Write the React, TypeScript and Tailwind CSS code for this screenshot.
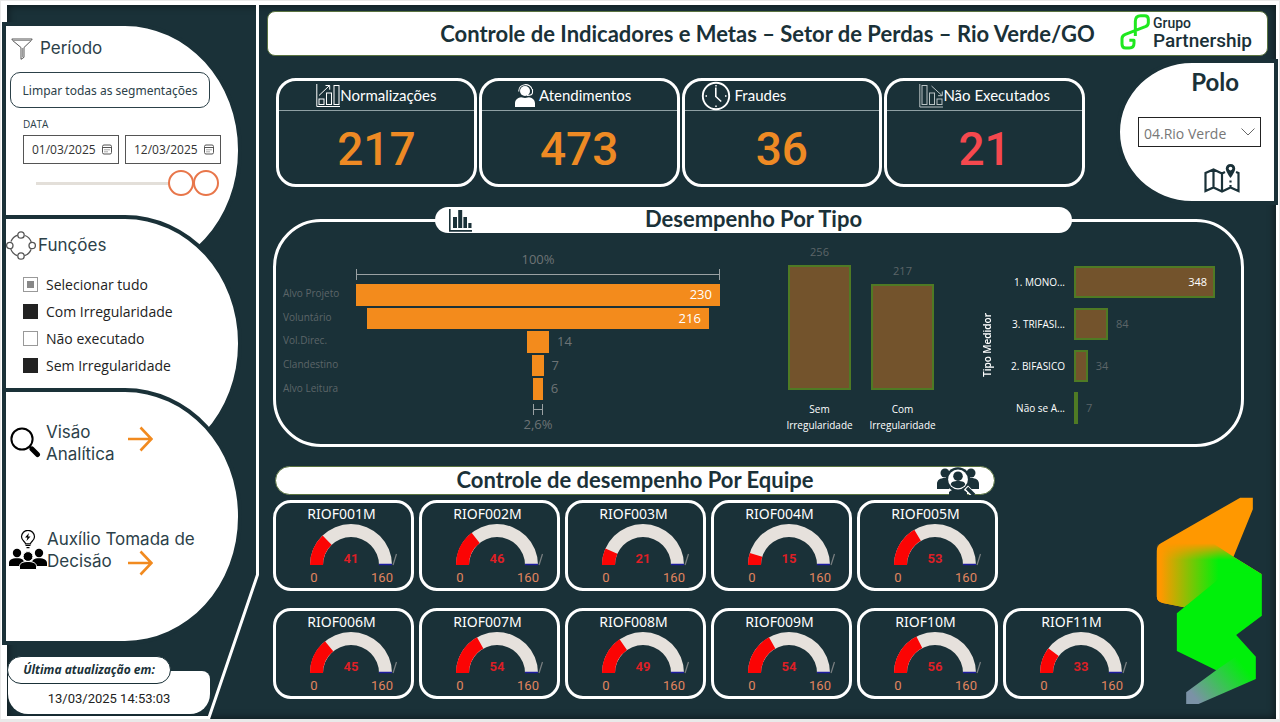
import React, { useState } from "react";

const SANS = "font-['Open_Sans','Noto_Sans',sans-serif]";

/* ---------- icons ---------- */

function FunnelIcon() {
  return (
    <svg className="h-[22px] w-[22px]" viewBox="0 0 22 22" fill="none" stroke="#555" strokeWidth="1" aria-hidden="true">
      <path d="M.8 1h20.400l-1.200 1.800-7 6.700v9.800l-3 2v-11.800l-8-6.700z" />
      <path d="M2.500 2.500h17M11.500 10v9" strokeWidth=".6" />
    </svg>
  );
}

function NodesIcon() {
  return (
    <svg className="h-[29px] w-[30px]" viewBox="0 0 30 29" fill="none" stroke="#555" strokeWidth="1.300" aria-hidden="true">
      <circle cx="15" cy="14.500" r="10.800" strokeDasharray="9.500 7.460" strokeDashoffset="-3.800" />
      <circle cx="15" cy="4" r="3.200" />
      <circle cx="15" cy="25" r="3.200" />
      <circle cx="3.800" cy="14.500" r="3.200" />
      <circle cx="26.200" cy="14.500" r="3.200" />
    </svg>
  );
}

function CalendarIcon() {
  return (
    <svg className="h-[11px] w-[10px] shrink-0" viewBox="0 0 10 11" fill="none" stroke="#555" strokeWidth="1" aria-hidden="true">
      <rect x=".5" y="1" width="9" height="9" rx="1.500" />
      <path d="M.5 3.500h9" />
      <path d="M2.500 5.800h1M4.500 5.800h1M6.500 5.800h1M2.500 7.800h1M4.500 7.800h1" />
    </svg>
  );
}

function MagnifierIcon() {
  return (
    <svg className="h-[31px] w-[31px]" viewBox="0 0 31 31" fill="none" stroke="#000" aria-hidden="true">
      <circle cx="12" cy="12" r="10.600" strokeWidth="2" />
      <path d="M19.500 19.500l2.500 2.500" strokeWidth="2" />
      <path d="M22 22l5.500 5.500" strokeWidth="5" strokeLinecap="round" />
    </svg>
  );
}

function ArrowIcon() {
  return (
    <svg className="h-[26px] w-[25px] shrink-0" viewBox="0 0 25 26" fill="none" stroke="#f18a1f" strokeWidth="2.600" aria-hidden="true">
      <path d="M0 13h23M12.500 1.500L23.500 13 12.500 24.500" />
    </svg>
  );
}

function IdeaTeamIcon() {
  return (
    <svg className="h-[40px] w-[38px]" viewBox="0 0 38 40" aria-hidden="true">
      <path d="M16.500 13.800c0-2-4-3-4-7a6.500 6.500 0 0113 0c0 4-4 5-4 7z" fill="#fff" stroke="#000" strokeWidth="1.200" />
      <path d="M20 3l-4 4.600h2.400L17.500 11l4-4.600h-2.400z" fill="#000" />
      <path d="M16.500 15.500h5M17.500 17.700h3" stroke="#000" strokeWidth="1.200" />
      <circle cx="8" cy="23" r="4.200" />
      <circle cx="30" cy="23" r="4.200" />
      <path d="M0 36v-3c0-3 2.500-4.700 8-4.700s7 1.700 7 4.700v3zM23 36v-3c0-3 2-4.700 7-4.700s8 1.700 8 4.700v3z" />
      <circle cx="19" cy="26.500" r="4.900" stroke="#fff" strokeWidth="1" />
      <path d="M10.500 39.500v-3c0-3.200 3-5 8.500-5s8.500 1.800 8.500 5v3z" stroke="#fff" strokeWidth="1" />
    </svg>
  );
}

function RisingChartIcon() {
  return (
    <svg className="h-[24px] w-[24px]" viewBox="0 0 24 24" fill="none" stroke="#fff" strokeWidth="1" aria-hidden="true">
      <path d="M.8 0v22.500H24" />
      <rect x="3" y="15" width="5" height="5.500" />
      <rect x="10.500" y="9" width="5" height="11.500" />
      <rect x="18" y="1.500" width="5" height="19" />
      <path d="M3 11.500L13.500 1.500M9.500 1.500h4.200v4.200" />
    </svg>
  );
}

function FallingChartIcon() {
  return (
    <svg className="h-[24px] w-[24px]" viewBox="0 0 24 24" fill="none" stroke="#b9c2c4" strokeWidth="1" aria-hidden="true">
      <path d="M.8 0v23H24" />
      <rect x="3" y="1.500" width="5" height="19" />
      <rect x="10.500" y="9" width="5" height="11.500" />
      <rect x="18" y="15" width="5" height="5.500" />
      <path d="M12.500 2L23 11.500M23.300 7.500v4.200h-4.200" />
    </svg>
  );
}

function AgentIcon() {
  return (
    <svg className="h-[24px] w-[20px]" viewBox="0 0 20 24" fill="#fff" aria-hidden="true">
      <circle cx="10" cy="7" r="5" />
      <path d="M3.800 7.500C3.300-1 16-1.500 17 5.500M17.500 5v3.500c0 2-2.500 3-5.500 3" fill="none" stroke="#fff" strokeWidth="1.100" />
      <path d="M0 23v-3.500c0-4 3.500-6 6-6.200l4 .8 4-.8c2.500.2 6 2.200 6 6.200V23z" />
    </svg>
  );
}

function ClockIcon() {
  return (
    <svg className="h-[30px] w-[30px]" viewBox="0 0 30 30" fill="none" stroke="#fff" aria-hidden="true">
      <circle cx="15" cy="15" r="13.200" strokeWidth="1.900" />
      <path d="M14.800 6.500v9l5.400 5" strokeWidth="1.600" />
      <path d="M15 4v1.500M15 24.500v1.500M4.500 15h1.500M24 15h1.500" strokeWidth="1.500" />
    </svg>
  );
}

function BarsIcon() {
  return (
    <svg className="h-[25px] w-[24px]" viewBox="0 0 24 25" fill="#1a3138" aria-hidden="true">
      <path d="M1 1h1.600v21H24v1.800H1z" />
      <path d="M5 9h4v11H5zM10.200 2h4v18h-4zM15.400 9h3.600v11h-3.600zM20.300 15h3.200v5h-3.200z" />
    </svg>
  );
}

function TeamSearchIcon() {
  return (
    <svg className="h-[28px] w-[44px]" viewBox="0 0 44 28" fill="#1a3138" aria-hidden="true">
      <circle cx="9" cy="6" r="4.500" />
      <circle cx="35" cy="6" r="4.500" />
      <path d="M1 22v-5c0-4 3-6 8-6h4v11zM43 22v-5c0-4-3-6-8-6h-4v11z" />
      <path d="M13 28v-3c2-2 5-3 9-3s7 1 9 3v3z" />
      <circle cx="22" cy="12.500" r="12.300" />
      <circle cx="22" cy="12.500" r="9.900" fill="#fff" />
      <circle cx="22" cy="9.200" r="4.800" />
      <path d="M14.800 17.800c0-3 3-3.800 7.200-3.800s7.200.8 7.200 3.800c-3.200 4.500-11.200 4.500-14.400 0z" />
      <path d="M30 20.500l7 7" stroke="#fff" strokeWidth="5.600" />
      <path d="M31 21l7 7" stroke="#1a3138" strokeWidth="3.600" />
    </svg>
  );
}

function MapPinIcon() {
  return (
    <svg className="h-[29px] w-[36px]" viewBox="0 0 36 29" fill="none" stroke="#1a3138" strokeWidth="2.200" aria-hidden="true">
      <path d="M21 8l-3 1.500-8.500-4L1.500 9v18l8-3.500L18 27.500l8.500-4 8 3.500V9L32 8M9.500 5.500v18M18 9.500v18M26.500 16.500v2M26.500 21v2.500" />
      <path d="M26.500 0c-2.800 0-4.700 2-4.700 4.600 0 3.600 4.700 9.400 4.700 9.400s4.700-5.800 4.700-9.400C31.200 2 29.300 0 26.500 0z" fill="#1a3138" stroke="none" />
      <circle cx="26.500" cy="4.600" r="1.800" fill="#fff" stroke="none" />
    </svg>
  );
}

function PartnershipMark() {
  return (
    <svg className="h-[36px] w-[30px]" viewBox="0 0 90 108" fill="none" stroke="#1fe81f" strokeWidth="9" strokeLinejoin="round" aria-hidden="true">
      <path d="M46 66V22Q46 5 62 5H74Q85 5 85 16V26Q85 34 76 38L16 61Q6 65 6 74V90Q6 102 17 102H28Q42 102 42 88V79H28" />
    </svg>
  );
}

function RibbonArt() {
  return (
    <svg className="h-[208px] w-[107px] shrink-0" viewBox="48 51 320 624" aria-hidden="true">
      <defs>
        <linearGradient id="side" gradientUnits="userSpaceOnUse" x1="62" y1="0" x2="235" y2="0">
          <stop offset="0" stopColor="#ff9800" />
          <stop offset="1" stopColor="#00f00a" />
        </linearGradient>
        <linearGradient id="fade" gradientUnits="userSpaceOnUse" x1="0" y1="190" x2="0" y2="240">
          <stop offset="0" stopColor="#000" />
          <stop offset="1" stopColor="#fff" />
        </linearGradient>
        <linearGradient id="tail" gradientUnits="userSpaceOnUse" x1="165" y1="655" x2="300" y2="545">
          <stop offset="0" stopColor="#7b92a6" />
          <stop offset="1" stopColor="#00f00a" />
        </linearGradient>
        <mask id="mid">
          <rect x="0" y="0" width="420" height="700" fill="url(#fade)" />
        </mask>
      </defs>
      <path d="M62 190L300 53H338V88L280 230L365 283L250 300L132 382L68 369Q50 364 50 350V212Q50 197 62 190Z" fill="#ff9800" />
      <path d="M50 188H216L280 230L365 283L250 300L132 382L68 369Q50 364 50 350Z" fill="url(#side)" mask="url(#mid)" />
      <path d="M365 283V407L288 465L347 530L228 571L110 513V400L262 276Z" fill="#00f00a" />
      <path d="M228 571L290 528L347 530V597L175 672H138V637Z" fill="url(#tail)" />
    </svg>
  );
}

/* ---------- sidebar ---------- */

const thumb =
  "[&::-webkit-slider-thumb]:pointer-events-auto [&::-webkit-slider-thumb]:h-[26px] [&::-webkit-slider-thumb]:w-[26px] [&::-webkit-slider-thumb]:appearance-none [&::-webkit-slider-thumb]:rounded-full [&::-webkit-slider-thumb]:border-2 [&::-webkit-slider-thumb]:border-[#e8764a] [&::-webkit-slider-thumb]:bg-white";

const panelShape =
  "relative -ml-[5px] h-[257px] w-[240px] rounded-tr-[117px_128px] rounded-br-[117px_128px] border-4 border-[#1a3138] bg-white";

function DateField({ label, initial }: { label: string; initial: string }) {
  const [value, setValue] = useState(initial);
  return (
    <label className="flex h-[29px] w-24 items-center border border-[#555] pr-[6px] pl-2">
      <input
        aria-label={label}
        className="w-full min-w-0 bg-transparent text-xs text-[#333] outline-none"
        value={value}
        onChange={(e) => setValue(e.target.value)}
      />
      <CalendarIcon />
    </label>
  );
}

function Period() {
  const [from, setFrom] = useState(85);
  const [to, setTo] = useState(100);
  return (
    <section className={panelShape}>
      <h2 className="mt-3 ml-[5px] flex h-[22px] items-center gap-[7px] font-['Inter',sans-serif] text-[17px] text-[#2c4149]">
        <FunnelIcon />
        Período
      </h2>
      <button
        type="button"
        className="mt-3 ml-1 h-9 w-[200px] rounded-[10px] border border-[#2c4149] pt-[2px] font-['Noto_Sans',sans-serif] text-xs whitespace-nowrap text-[#2c4149]"
      >
        Limpar todas as segmentações
      </button>
      <fieldset className={`ml-[17px] ${SANS}`}>
        <legend className="pt-2 text-[10px] leading-4 font-medium text-[#2c4149]">DATA</legend>
        <div className="mt-[3px] flex gap-[6px]">
          <DateField label="Data inicial" initial="01/03/2025" />
          <DateField label="Data final" initial="12/03/2025" />
        </div>
      </fieldset>
      <div className="relative mt-[6px] ml-[17px] h-[26px] w-[196px]">
        <div className="absolute top-3 right-[13px] left-[13px] h-[3px] bg-[#e3dfd9]" />
        <div className="absolute top-3 right-[13px] h-[2px] w-[26px] bg-[#e8764a]" />
        <input
          type="range"
          aria-label="Início do período"
          className={`pointer-events-none absolute inset-0 w-full appearance-none bg-transparent ${thumb}`}
          value={from}
          onChange={(e) => setFrom(Number(e.target.value))}
        />
        <input
          type="range"
          aria-label="Fim do período"
          className={`pointer-events-none absolute inset-0 w-full appearance-none bg-transparent ${thumb}`}
          value={to}
          onChange={(e) => setTo(Number(e.target.value))}
        />
      </div>
    </section>
  );
}

function Functions() {
  const [picked, setPicked] = useState<Record<string, boolean>>({
    "Com Irregularidade": true,
    "Não executado": false,
    "Sem Irregularidade": true,
  });
  const names = Object.keys(picked);
  const all = names.every((n) => picked[n]);
  const some = names.some((n) => picked[n]);
  const box = "h-[15px] w-[15px] appearance-none border border-[#999] bg-white checked:border-[#222] checked:bg-[#222]";
  return (
    <section className={`${panelShape} -mt-16`}>
      <h2 className="mt-3 flex h-[29px] items-center gap-[2px] font-['Inter',sans-serif] text-[17px] text-[#2c4149]">
        <NodesIcon />
        Funções
      </h2>
      <ul className={`mt-[11px] ml-[17px] text-sm text-[#222] ${SANS}`}>
        <li>
          <label className="flex h-[27px] items-center gap-2">
            <input
              type="checkbox"
              className={some && !all ? "h-[15px] w-[15px] appearance-none border border-[#999] bg-[#888] shadow-[inset_0_0_0_3px_white]" : box}
              checked={all}
              onChange={() => setPicked(Object.fromEntries(names.map((n) => [n, !all])))}
            />
            Selecionar tudo
          </label>
        </li>
        {names.map((n) => (
          <li key={n}>
            <label className="flex h-[27px] items-center gap-2">
              <input type="checkbox" className={box} checked={picked[n]} onChange={() => setPicked({ ...picked, [n]: !picked[n] })} />
              {n}
            </label>
          </li>
        ))}
      </ul>
    </section>
  );
}

function Sidebar() {
  return (
    <aside className="relative flex w-[252px] shrink-0 flex-col pt-[17px]">
      <svg className="absolute inset-0 h-full w-full" viewBox="0 0 252 713" preserveAspectRatio="none" fill="none" stroke="#fff" strokeWidth="3" aria-hidden="true">
        <path d="M250.500 0V569L202 711.500H0" />
      </svg>
      <Period />
      <Functions />
      <nav className={`${panelShape} -mt-[84px] font-['Inter',sans-serif] text-[17px] leading-[22px] text-[#2c4149]`}>
        <a href="#visao" className="mt-[29px] ml-1 flex items-start">
          <span className="pt-[6px]">
            <MagnifierIcon />
          </span>
          <span className="ml-[5px] w-[82px]">
            Visão
            <br />
            Analítica
          </span>
          <span className="pt-[5px]">
            <ArrowIcon />
          </span>
        </a>
        <a href="#auxilio" className="mt-[63px] ml-[3px] flex items-center">
          <IdeaTeamIcon />
          <span className="whitespace-nowrap">
            Auxílio Tomada de
            <span className="flex h-[22px] items-start">
              <span className="w-[81px]">Decisão</span>
              <ArrowIcon />
            </span>
          </span>
        </a>
      </nav>
      <footer className="relative mt-[11px]">
        <div className={`relative z-10 flex h-[28px] w-[164px] items-center justify-center rounded-full border border-[#1a3138] bg-white text-xs font-bold text-[#1a3138] italic ${SANS}`}>
          Última atualização em:
        </div>
        <div className="-mt-[13px] ml-px flex h-[43px] w-[202px] items-center justify-center rounded-tr-lg rounded-b-[20px] bg-white pt-[12px] font-['Roboto',sans-serif] text-[13px] text-[#222]">
          13/03/2025 14:53:03
        </div>
      </footer>
    </aside>
  );
}

/* ---------- indicators ---------- */

const indicators = [
  { label: "Normalizações", value: 217, icon: <RisingChartIcon />, head: "justify-center", tone: "text-[#ee8a24]" },
  { label: "Atendimentos", value: 473, icon: <AgentIcon />, head: "justify-center gap-1 pr-3", tone: "text-[#ee8a24]" },
  { label: "Fraudes", value: 36, icon: <ClockIcon />, head: "gap-1 pl-4", tone: "text-[#ee8a24]" },
  { label: "Não Executados", value: 21, icon: <FallingChartIcon />, head: "justify-center", tone: "text-[#f5484e]" },
];

function Indicators() {
  return (
    <div className="mt-[19px] ml-[17px] grid flex-1 grid-cols-4 gap-[2px]">
      {indicators.map((i) => (
        <article key={i.label} className="h-[109px] overflow-hidden rounded-[20px] border-3 border-white">
          <h3 className={`flex h-[30px] items-center border-b border-[#8fa0a4] font-['Lato',sans-serif] text-[15px] text-white ${i.head}`}>
            {i.icon}
            {i.label}
          </h3>
          <p className={`pt-2 text-center font-['Roboto',sans-serif] text-[46px] leading-[60px] font-medium ${i.tone}`}>{i.value}</p>
        </article>
      ))}
    </div>
  );
}

function Polo() {
  return (
    <section className="-mr-[2px] ml-[31px] flex h-[146px] w-[162px] flex-col rounded-tl-[76px_73px] rounded-bl-[76px_73px] border-4 border-[#1a3138] bg-white pr-[13px]">
      <h2 className="mt-[5px] pr-[22px] text-right font-['Lato',sans-serif] text-2xl leading-7 font-bold text-[#1a3138]">
        <label htmlFor="polo">Polo</label>
      </h2>
      <div className="relative mt-[21px] ml-[18px]">
        <select id="polo" className={`h-[30px] w-full appearance-none border border-[#222] bg-white pt-[3px] pl-[5px] text-sm text-[#777] ${SANS}`}>
          <option>04.Rio Verde</option>
        </select>
        <svg className="pointer-events-none absolute top-[11px] right-[6px] h-2 w-[14px]" viewBox="0 0 14 8" fill="none" stroke="#666" aria-hidden="true">
          <path d="M.5.500L7 7 13.500.500" />
        </svg>
      </div>
      <div className="mt-[17px] mr-[21px] flex justify-end">
        <MapPinIcon />
      </div>
    </section>
  );
}

/* ---------- charts ---------- */

const funnel = [
  { label: "Alvo Projeto", value: 230 },
  { label: "Voluntário", value: 216 },
  { label: "Vol.Direc.", value: 14 },
  { label: "Clandestino", value: 7 },
  { label: "Alvo Leitura", value: 6 },
];

function Bracket({ share }: { share: number }) {
  return (
    <div className="mx-auto flex h-[11px] items-center border-x border-[#9aa1a3]" style={{ width: `${share * 100}%` }}>
      <div className="h-px w-full bg-[#9aa1a3]" />
    </div>
  );
}

function FunnelChart() {
  return (
    <div className="flex text-[13px] text-[#6d7375]">
      <div className="w-[73px] pt-[50px] text-[10px] text-[#5c6568]">
        <ul className="flex h-[116px] flex-col gap-[2px]">
          {funnel.map((f) => (
            <li key={f.label} className="flex flex-1 items-center whitespace-nowrap">
              {f.label}
            </li>
          ))}
        </ul>
      </div>
      <div className="w-[364px]">
        <p className="pt-4 text-center leading-5">100%</p>
        <Bracket share={1} />
        <ul className="mt-1 flex h-[116px] flex-col gap-[2px]">
          {funnel.map((f) => {
            const inside = f.value > 100;
            return (
              <li key={f.label} className="flex flex-1 justify-center">
                <div className="relative flex items-center justify-end bg-[#f38b1c]" style={{ width: `${(f.value / 230) * 100}%` }}>
                  {inside ? (
                    <span className="pr-2 text-white">{f.value}</span>
                  ) : (
                    <span className="absolute left-full pl-2">{f.value}</span>
                  )}
                </div>
              </li>
            );
          })}
        </ul>
        <div className="pt-1">
          <Bracket share={6 / 230} />
        </div>
        <p className="text-center leading-[18px]">2,6%</p>
      </div>
    </div>
  );
}

const columns = [
  { label: "Sem Irregularidade", value: 256 },
  { label: "Com Irregularidade", value: 217 },
];

function ColumnChart() {
  return (
    <div className="mr-[45px] ml-auto flex gap-5 pt-2">
      {columns.map((c) => (
        <div key={c.label} className="flex w-[63px] flex-col items-center">
          <div className="flex h-[149px] w-full flex-col justify-end">
            <p className="pb-[5px] text-center text-[11px] leading-4 text-[#5c6568]">{c.value}</p>
            <div className="border-2 border-[#4f7a24] bg-[#73532c]" style={{ height: `${(c.value / 256) * 125}px` }} />
          </div>
          <p className="mt-[11px] w-[70px] text-center text-[10px] leading-4 text-white">{c.label}</p>
        </div>
      ))}
    </div>
  );
}

const meters = [
  { label: "1. MONO...", value: 348 },
  { label: "3. TRIFASI...", value: 84 },
  { label: "2. BIFASICO", value: 34 },
  { label: "Não se A...", value: 7 },
];

function MeterChart() {
  return (
    <div className="flex items-start pt-[33px]">
      <p className="h-[158px] w-4 rotate-180 text-center text-[10px] leading-4 font-semibold text-white [writing-mode:vertical-rl]">Tipo Medidor</p>
      <ul className="flex flex-col gap-[10px] pl-[3px] text-[10px]">
        {meters.map((m) => (
          <li key={m.label} className="flex h-8 items-center">
            <span className="w-[67px] text-right whitespace-nowrap text-white">{m.label}</span>
            <div className="ml-[9px] flex w-[141px] items-center text-[11px]">
              <div
                className="flex h-8 min-w-[3px] shrink-0 items-center justify-end border-2 border-[#4f7a24] bg-[#73532c]"
                style={{ width: `${(m.value / 348) * 100}%` }}
              >
                {m.value > 100 && <span className="pr-[6px] text-white">{m.value}</span>}
              </div>
              {m.value <= 100 && <span className="pl-2 text-[#5c6568]">{m.value}</span>}
            </div>
          </li>
        ))}
      </ul>
    </div>
  );
}

function PerformanceByType() {
  return (
    <section className="mt-[14px] mr-8 ml-[14px] h-[228px] rounded-[48px] border-3 border-white">
      <h2 className="-mt-[15px] mr-[169px] ml-[159px] grid h-[26px] grid-cols-[1fr_auto_1fr] items-center rounded-full bg-white pl-[13px] font-['Lato',sans-serif] text-[22px] leading-[22px] font-bold text-[#1a3138]">
        <BarsIcon />
        <span className="pr-[13px] pb-[2px]">Desempenho Por Tipo</span>
      </h2>
      <div className={`flex justify-between pr-[26px] pl-[7px] ${SANS}`}>
        <FunnelChart />
        <ColumnChart />
        <MeterChart />
      </div>
    </section>
  );
}

/* ---------- team gauges ---------- */

const teams = [
  { name: "RIOF001M", value: 41 },
  { name: "RIOF002M", value: 46 },
  { name: "RIOF003M", value: 21 },
  { name: "RIOF004M", value: 15 },
  { name: "RIOF005M", value: 53 },
  { name: "RIOF006M", value: 45 },
  { name: "RIOF007M", value: 54 },
  { name: "RIOF008M", value: 49 },
  { name: "RIOF009M", value: 54 },
  { name: "RIOF10M", value: 56 },
  { name: "RIOF11M", value: 33 },
];

function ring(from: number, to: number) {
  const at = (r: number, t: number) => `${-r * Math.cos(Math.PI * t)} ${-r * Math.sin(Math.PI * t)}`;
  return `M${at(41, from)}A41 41 0 0 1 ${at(41, to)}L${at(28, to)}A28 28 0 0 0 ${at(28, from)}Z`;
}

function Gauge({ name, value }: { name: string; value: number }) {
  return (
    <article className="h-[91px] rounded-[18px] border-3 border-white">
      <h3 className="pr-1 text-center font-['Noto_Sans',sans-serif] text-sm leading-[21px] text-white">{name}</h3>
      <svg className="mx-auto h-[62px] w-[110px] overflow-visible pl-[14px]" viewBox="-48 -41 96 62" role="img" aria-label={`${name}: ${value} de 160`}>
        <path d={ring(0, 1)} fill="#e6e1dc" />
        <path d={ring(0, value / 160)} fill="#fb0404" />
        <path d="M28 -.500H41" stroke="#1c1ca0" strokeWidth="1.500" />
        <path d="M42 0L45.500 -11" stroke="#7b8082" strokeWidth="1.200" />
        <g textAnchor="middle" fontFamily="Roboto, sans-serif">
          <text x="0" y="-2" fontSize="13" fontWeight="700" fill="#dd1f26">{value}</text>
          <text x="-37" y="17" fontSize="13" fill="#e0855f">0</text>
          <text x="31" y="17" fontSize="13" fill="#e0855f">160</text>
        </g>
      </svg>
    </article>
  );
}

function Teams() {
  const row = "grid grid-cols-[repeat(6,141px)] gap-x-[5px]";
  return (
    <section className="mt-[19px] mr-[13px] ml-[14px] flex items-start justify-between">
      <div>
        <h2 className="mr-[149px] ml-[2px] grid h-[29px] grid-cols-[1fr_auto_1fr] items-center rounded-full border border-[#5a7340] bg-white font-['Lato',sans-serif] text-[22px] leading-[22px] font-bold text-[#1a3138]">
          <span />
          <span className="pb-[2px]">Controle de desempenho Por Equipe</span>
          <span className="flex justify-end pr-[14px]">
            <TeamSearchIcon />
          </span>
        </h2>
        <div className={`mt-[5px] ${row}`}>
          {teams.slice(0, 5).map((t) => (
            <Gauge key={t.name} {...t} />
          ))}
        </div>
        <div className={`mt-[17px] ${row}`}>
          {teams.slice(5).map((t) => (
            <Gauge key={t.name} {...t} />
          ))}
        </div>
      </div>
      <div className="pt-[31px]">
        <RibbonArt />
      </div>
    </section>
  );
}

/* ---------- page ---------- */

export default function App() {
  return (
    <div className="flex min-h-screen flex-col bg-[#e9e9e9] px-px pt-px pb-[3px]">
      <div className="flex flex-1 flex-col bg-white pt-1 pr-[3px] pl-[6px]">
        <div className="flex flex-1 bg-[#1a3138] shadow-[inset_0_0_8px_rgba(0,0,0,0.6)]">
          <Sidebar />
          <main className="min-w-0 flex-1">
            <header className="mx-2 mt-[6px] grid h-[45px] grid-cols-[1fr_auto_1fr] items-center rounded-lg border border-[#5a7340] bg-white">
              <span />
              <h1 className="font-['Lato',sans-serif] text-[22px] font-bold whitespace-nowrap text-[#1a3138]">
                Controle de Indicadores e Metas – Setor de Perdas – Rio Verde/GO
              </h1>
              <div className="flex items-center justify-end gap-[3px] pr-[15px] pb-[3px] text-[#1a3138]">
                <PartnershipMark />
                <p className="font-['Roboto',sans-serif] text-[19px] leading-[17px] font-medium">
                  <span className="block text-sm leading-[17px]">Grupo</span>
                  Partnership
                </p>
              </div>
            </header>
            <div className="mt-[3px] flex items-start">
              <Indicators />
              <Polo />
            </div>
            <PerformanceByType />
            <Teams />
          </main>
        </div>
      </div>
    </div>
  );
}
